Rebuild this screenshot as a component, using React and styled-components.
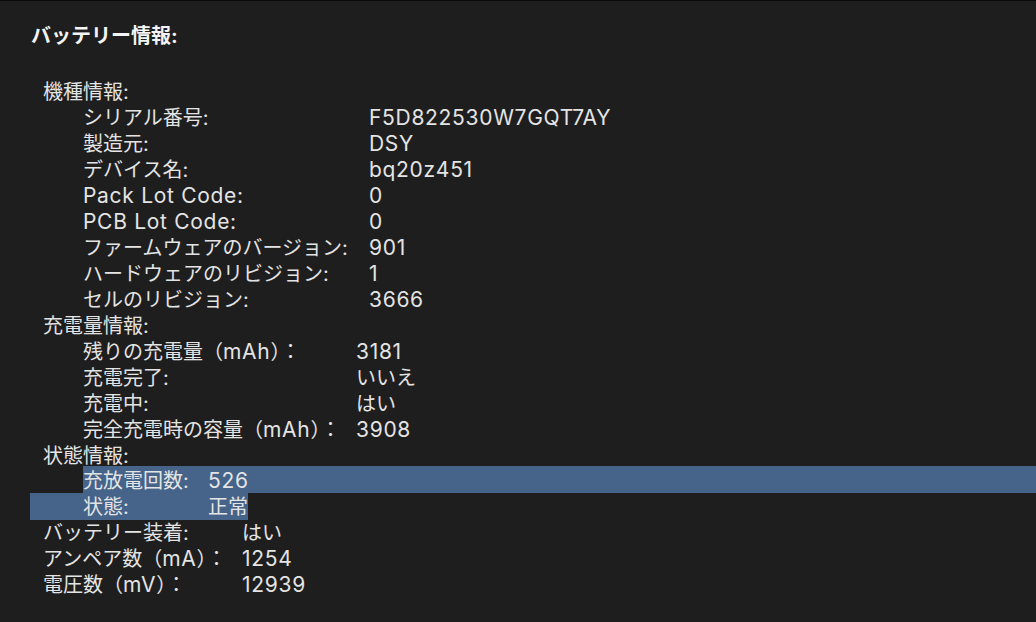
import React from "react";
import styled, { createGlobalStyle } from "styled-components";

const GlobalStyle = createGlobalStyle`
  html, body {
    margin: 0;
    padding: 0;
    background: #1e1e1e;
  }
  body {
    font-family: Inter, "Liberation Sans", "Noto Sans CJK JP", sans-serif;
  }
`;

const Page = styled.div`
  width: 1036px;
  height: 622px;
  box-sizing: border-box;
  border-top: 1px solid #0b0b0b;
  background: #1e1e1e;
  color: #e4e4e4;
  padding: 22px 0 0 30px;
  overflow: hidden;
  font-size: 20px;
  line-height: 26px;
`;

const Title = styled.div`
  font-weight: 700;
  color: #f4f4f4;
  margin-left: 1px;
  margin-bottom: 30px;
`;

const Section = styled.div`
  padding-left: 13px;
`;

const Heading = styled.div`
  height: 26px;
`;

const Group = styled.div`
  display: grid;
  grid-template-columns: ${({ $label }) => $label}px auto;
  padding-left: ${({ $indent }) => $indent || 0}px;
`;

const Row = styled.div`
  display: contents;
`;

const Cell = styled.div`
  height: 26px;
  white-space: nowrap;
`;

/* Latin runs are set a touch larger so they match the system font's width */
const Lat = styled.span`
  font-size: 21px;
  letter-spacing: 0.7px;
`;

const Highlight = styled.div`
  display: grid;
  grid-template-columns: ${({ $label }) => $label}px auto;
  box-sizing: border-box;
  background: #466389;
  height: 27px;
  padding-top: ${({ $shift }) => $shift}px;
  margin-top: ${({ $lift }) => -$lift}px;
  margin-left: ${({ $pull }) => -$pull}px;
  padding-left: ${({ $pull }) => $pull}px;
  width: ${({ $full }) => ($full ? "auto" : "fit-content")};
  margin-right: ${({ $full }) => ($full ? "-20px" : "0")};
`;

const SelectBlock = styled.div`
  padding-left: 40px;
`;

const model = [
  ["シリアル番号:", "F5D822530W7GQT7AY"],
  ["製造元:", "DSY"],
  ["デバイス名:", "bq20z451"],
  [<Lat>Pack Lot Code:</Lat>, "0"],
  [<Lat>PCB Lot Code:</Lat>, "0"],
  ["ファームウェアのバージョン:", "901"],
  ["ハードウェアのリビジョン:", "1"],
  ["セルのリビジョン:", "3666"],
];

const charge = [
  [<>残りの充電量（<Lat>mAh</Lat>）：</>, "3181"],
  ["充電完了:", "いいえ"],
  ["充電中:", "はい"],
  [<>完全充電時の容量（<Lat>mAh</Lat>）：</>, "3908"],
];

const top = [
  ["バッテリー装着:", "はい"],
  [<>アンペア数（<Lat>mA</Lat>）：</>, "1254"],
  [<>電圧数（<Lat>mV</Lat>）：</>, "12939"],
];

const isLatin = (s) => /^[\x00-\x7f]+$/.test(s);

const Value = ({ children }) =>
  isLatin(children) ? <Lat>{children}</Lat> : children;

const Rows = ({ items }) =>
  items.map(([k, v], i) => (
    <Row key={i}>
      <Cell>{k}</Cell>
      <Cell>
        <Value>{v}</Value>
      </Cell>
    </Row>
  ));

export default function App() {
  return (
    <>
      <GlobalStyle />
      <Page>
        <Title>バッテリー情報:</Title>
        <Section>
          <Heading>機種情報:</Heading>
          <Group $label={286} $indent={40}>
            <Rows items={model} />
          </Group>
          <Heading>充電量情報:</Heading>
          <Group $label={273} $indent={40}>
            <Rows items={charge} />
          </Group>
          <Heading>状態情報:</Heading>
          <SelectBlock>
            <Highlight $label={125} $pull={0} $lift={3} $shift={2} $full>
              <Cell>充放電回数:</Cell>
              <Cell>
                <Lat>526</Lat>
              </Cell>
            </Highlight>
            <Highlight $label={125} $pull={53} $lift={0} $shift={1}>
              <Cell>状態:</Cell>
              <Cell>正常</Cell>
            </Highlight>
          </SelectBlock>
          <Group $label={199}>
            <Rows items={top} />
          </Group>
        </Section>
      </Page>
    </>
  );
}
